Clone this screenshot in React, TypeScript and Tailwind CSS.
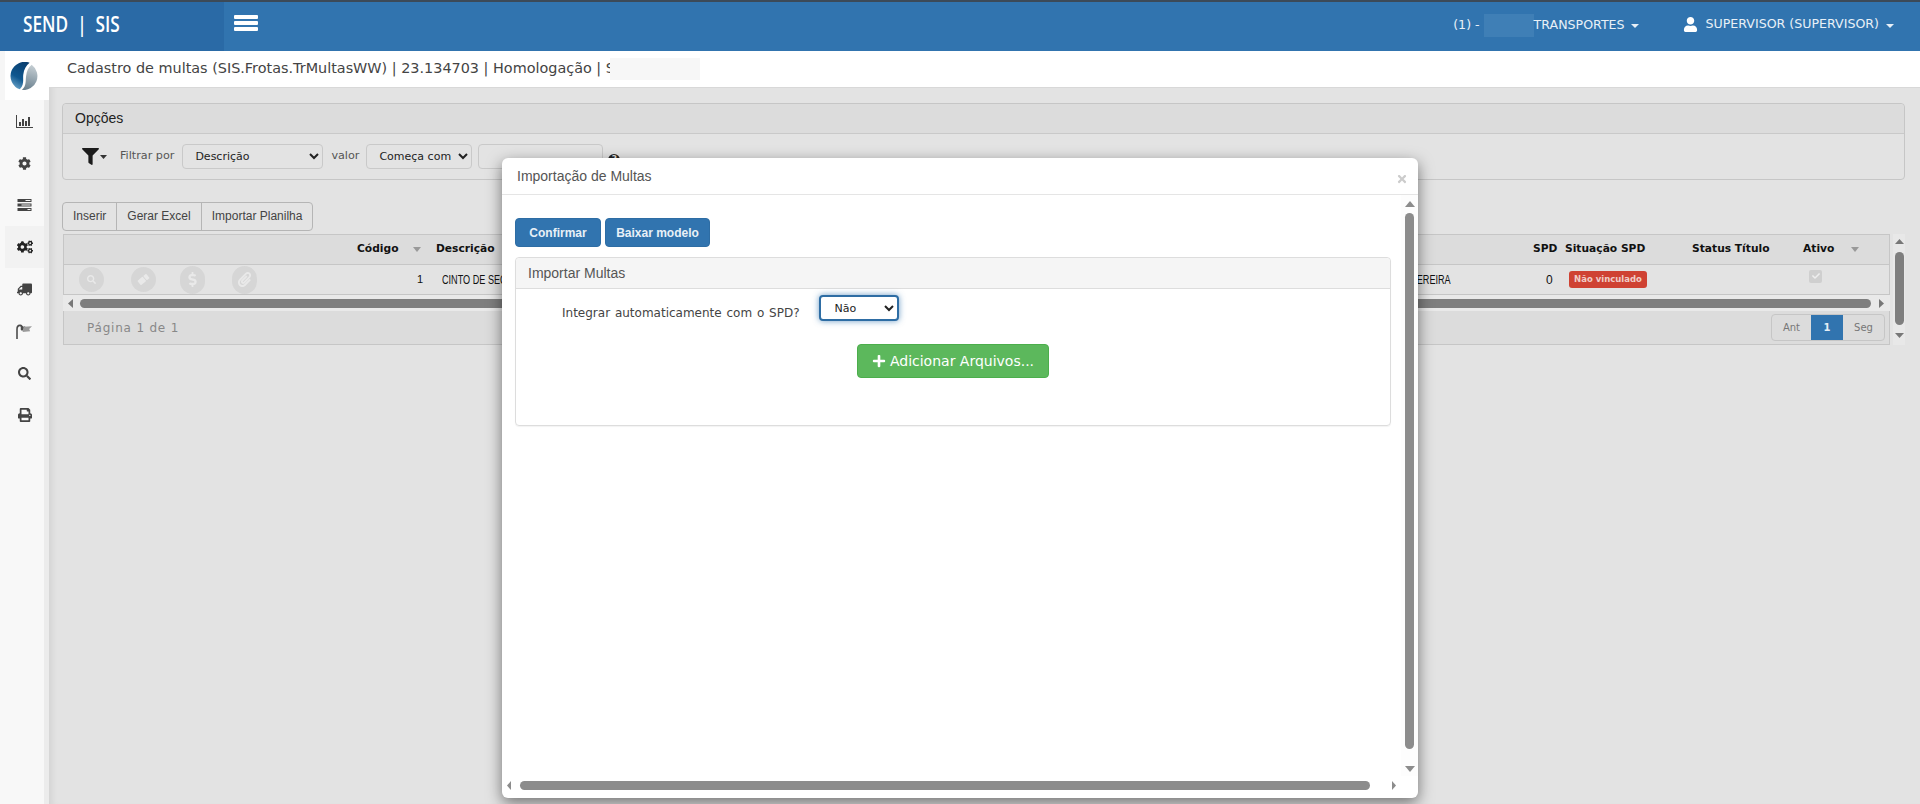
import { FaCheck, FaCog, FaCogs, FaDollarSign, FaFilter, FaPaperclip, FaPlus, FaPrint, FaSearch, FaTimes, FaTruck, FaUser } from 'react-icons/fa';

const Triangle = ({ dir, className }: { dir: 'up' | 'down' | 'left' | 'right'; className: string }) => {
  const points = { up: '0,8 5,0 10,8', down: '0,0 10,0 5,8', left: '8,0 8,10 0,5', right: '0,0 8,5 0,10' }[dir];
  const box = dir === 'up' || dir === 'down' ? '0 0 10 8' : '0 0 8 10';
  return (
    <svg viewBox={box} preserveAspectRatio="none" className={className} fill="currentColor">
      <polygon points={points} />
    </svg>
  );
};

const BarsIcon = () => (
  <svg viewBox="0 0 24 16" className="w-[24px] h-[16px]" fill="currentColor">
    <rect x="0" y="0" width="24" height="4" rx="1" />
    <rect x="0" y="6" width="24" height="4" rx="1" />
    <rect x="0" y="12" width="24" height="4" rx="1" />
  </svg>
);

const ChartIcon = () => (
  <svg viewBox="0 0 17 13" className="w-[17px] h-[13px]" fill="currentColor">
    <path d="M0 0h1v12h16v1H0z" />
    <rect x="3" y="7" width="2" height="4" />
    <rect x="6" y="4" width="2" height="7" />
    <rect x="9" y="6" width="2" height="5" />
    <rect x="12" y="2" width="2" height="9" />
  </svg>
);

const TasksIcon = () => (
  <svg viewBox="0 0 14 12" className="w-[15px] h-[12px]" fill="currentColor">
    <path d="M0 0h14v3H0z" />
    <path d="M0 4.5h14v3H0z" />
    <path d="M0 9h14v3H0z" />
    <path d="M8 1h5v1H8zM4 5.5h9v1H4zM10 10h3v1h-3z" fill="#f8f8f8" />
  </svg>
);

const FlagIcon = () => (
  <svg viewBox="0 0 18 16" className="w-[17px] h-[15px]">
    <path d="M1 16V5.5C1 3 2.2 1.5 4 1.5c1 0 1.6.4 2 1" fill="none" stroke="#4b4b4b" strokeWidth="1.7" />
    <path d="M5 .5l3 2.5 2-.5-3.5 5L5 6z" fill="#4b4b4b" />
    <path d="M8 3l9-.6-3 3 1 2.4-8 .6z" fill="#9a9a9a" />
  </svg>
);

const EraserIcon = () => (
  <svg viewBox="0 0 16 16" className="w-[13px] h-[13px]" fill="currentColor">
    <g transform="rotate(-40 8 8)">
      <rect x="1" y="4.5" width="8.5" height="7" rx="1" />
      <rect x="10.5" y="4.5" width="4.5" height="7" rx="1" />
    </g>
  </svg>
);

const Logo = () => (
  <svg viewBox="0 0 40 40" className="w-[28px] h-[28px]">
    <defs>
      <linearGradient id="logoBlue" x1="0.7" y1="0" x2="0.3" y2="1">
        <stop offset="0" stopColor="#0a3f70" />
        <stop offset="0.6" stopColor="#0f578f" />
        <stop offset="1" stopColor="#6aa3c8" />
      </linearGradient>
      <linearGradient id="logoGray" x1="0.6" y1="0" x2="0.4" y2="1">
        <stop offset="0" stopColor="#c5ced3" />
        <stop offset="1" stopColor="#6b818f" />
      </linearGradient>
    </defs>
    <path d="M28 1A20 20 0 0 0 14 39C21 32 18 24 19 18 20 10 23 5 28 1z" fill="url(#logoBlue)" />
    <path d="M31 4A20 20 0 0 1 17 40C24 34 22 26 23 20 24 13 26 8 31 4z" fill="url(#logoGray)" />
  </svg>
);

const sideItems = [
  { icon: <ChartIcon />, active: false },
  { icon: <FaCog size={13} />, active: false },
  { icon: <TasksIcon />, active: false },
  { icon: <FaCogs size={16} className="text-[#222]" />, active: true },
  { icon: <FaTruck size={15} className="-scale-x-100" />, active: false },
  { icon: <FlagIcon />, active: false },
  { icon: <FaSearch size={13} />, active: false },
  { icon: <FaPrint size={14} />, active: false },
];

const rowActions = [
  { icon: <FaSearch size={9} />, box: 'w-[25px] h-[25px] ml-[15px]' },
  { icon: <EraserIcon />, box: 'w-[25px] h-[25px] ml-[27px]' },
  { icon: <FaDollarSign size={15} />, box: 'w-[25px] h-[28px] ml-[24px]' },
  { icon: <FaPaperclip size={15} />, box: 'w-[25px] h-[28px] ml-[27px]' },
];

export default function App() {
  return (
    <div className="relative w-[1920px] h-[804px] overflow-hidden bg-[#e3e3e3] font-['Liberation_Sans',sans-serif]">
      {/* barra superior */}
      <header className="flex h-[51px] border-t-2 border-[#3c4a58] bg-[#3174af] text-white">
        <div className="flex items-center w-[224px] pl-[23px] pb-[3px] bg-[#2a6aa6]">
          <span className="inline-block origin-left scale-x-[0.82] font-['Open_Sans',sans-serif] text-[21px] font-semibold whitespace-pre">SEND  |  SIS</span>
        </div>
        <button className="flex items-start pt-[13px] pl-[10px] text-white">
          <BarsIcon />
        </button>
        <div className="flex-1" />
        <div className="flex items-center h-[47px] pr-[26px] font-['DejaVu_Sans',sans-serif] text-[12.6px] text-[#e8f0f7]">
          <span className="whitespace-pre">(1) - </span>
          <span className="w-[50px] h-[23px] bg-[#3f7fb6]" />
          <span>TRANSPORTES</span>
          <Triangle dir="down" className="w-[8px] h-[4px] ml-[6px]" />
          <FaUser size={15} className="ml-[44px] mb-[2px] text-white" />
          <span className="ml-[8px] mb-[2px]">SUPERVISOR (SUPERVISOR)</span>
          <Triangle dir="down" className="w-[8px] h-[4px] ml-[7px]" />
        </div>
      </header>

      <div className="flex h-[753px]">
        {/* menu lateral */}
        <aside className="flex flex-col w-[49px] shrink-0 bg-[#ececec]">
          <div className="h-[49px] pl-[5px] bg-[#f6f6f6]">
            <div className="flex items-center justify-center h-full pr-[6px] bg-white">
              <Logo />
            </div>
          </div>
          <div className="flex-1 w-[44px] pl-[5px] bg-[#f8f8f8]">
            {sideItems.map((item, i) => (
              <div key={i} className={`flex items-center justify-center h-[42px] text-[#444] ${item.active ? 'bg-[#f2f2f2]' : 'bg-[#f8f8f8]'}`}>
                {item.icon}
              </div>
            ))}
          </div>
        </aside>

        <main className="flex-1 min-w-0 shadow-[inset_7px_0_6px_-4px_rgba(0,0,0,0.07)]">
          {/* título */}
          <div className="flex items-center h-[37px] pl-[18px] bg-white border-b border-[#d8d8d8] font-['DejaVu_Sans',sans-serif] text-[14.4px] text-[#444]">
            <span className="whitespace-pre">Cadastro de multas (SIS.Frotas.TrMultasWW) | 23.134703 | Homologação | S</span>
            <span className="w-[90px] h-[22px] -ml-[5px] bg-[#f7f7f7]" />
          </div>

          <div className="pt-[15px] pl-[13px] pr-[15px]">
            {/* opções */}
            <section className="h-[77px] border border-[#c6c6c6] rounded-[4px]">
              <div className="flex items-center h-[30px] pl-[12px] bg-[#dcdcdc] border-b border-[#c9c9c9] rounded-t-[4px] text-[14px] text-[#222]">Opções</div>
              <div className="flex items-center h-[45px] pl-[19px] font-['DejaVu_Sans',sans-serif] text-[11.2px] text-[#555]">
                <FaFilter size={17} className="text-[#1c1c1c]" />
                <Triangle dir="down" className="w-[7px] h-[4px] ml-[1px] text-[#333]" />
                <span className="ml-[13px]">Filtrar por</span>
                <select defaultValue="Descrição" className="w-[141px] h-[25px] ml-[8px] pl-[8px] bg-[#e3e3e3] border border-[#c9c9c9] rounded-[4px] text-[11px] text-[#222]">
                  <option>Descrição</option>
                </select>
                <span className="ml-[8px]">valor</span>
                <select defaultValue="Começa com" className="w-[106px] h-[25px] ml-[7px] pl-[8px] bg-[#e3e3e3] border border-[#c9c9c9] rounded-[4px] text-[11px] text-[#222]">
                  <option>Começa com</option>
                </select>
                <span className="w-[125px] h-[25px] ml-[6px] border border-[#c9c9c9] rounded-[4px]" />
                <span className="flex items-center justify-center w-[12px] h-[12px] ml-[5px] mt-[6px] rounded-full bg-[#222] text-[9px] font-bold text-[#ddd]">?</span>
              </div>
            </section>

            {/* botões */}
            <div className="flex w-fit h-[29px] mt-[22px] border border-[#b5b5b5] rounded-[4px] text-[12px] text-[#444]">
              <div className="flex items-center px-[10px] pb-[2px] border-r border-[#b5b5b5]">Inserir</div>
              <div className="flex items-center px-[10px] pb-[2px] border-r border-[#b5b5b5]">Gerar Excel</div>
              <div className="flex items-center px-[10px] pb-[2px]">Importar Planilha</div>
            </div>

            {/* grade */}
            <div className="flex mt-[3px]">
              <div className="w-[1827px] ml-[1px]">
                <div className="flex items-center h-[31px] bg-[#dcdcdc] border border-[#c6c6c6] font-['DejaVu_Sans',sans-serif] text-[10.7px] font-bold text-[#111]">
                  <span className="ml-[293px] w-[56px]">Código</span>
                  <Triangle dir="down" className="w-[8px] h-[5px] text-[#999]" />
                  <span className="ml-[15px] w-[1097px]">Descrição</span>
                  <span className="w-[32px]">SPD</span>
                  <span className="w-[127px]">Situação SPD</span>
                  <span className="w-[111px]">Status Título</span>
                  <span className="w-[48px]">Ativo</span>
                  <Triangle dir="down" className="w-[8px] h-[5px] text-[#999]" />
                </div>
                <div className="flex items-center h-[30px] border border-t-0 border-[#c6c6c6] text-[11px] text-[#111]">
                  {rowActions.map((a, i) => (
                    <span key={i} className={`flex items-center justify-center shrink-0 rounded-full bg-[#d6d6d6] text-[#e9e9e9] ${a.box}`}>{a.icon}</span>
                  ))}
                  <span className="ml-[160px] w-[6px] text-[11px]">1</span>
                  <span className="flex justify-between ml-[19px] w-[1009px] whitespace-nowrap text-[12px]">
                    <span className="inline-block origin-left scale-x-[0.76]">CINTO DE SEGURANÇA</span>
                    <span className="inline-block origin-right scale-x-[0.76]">PEREIRA</span>
                  </span>
                  <span className="ml-[95px] w-[7px] text-[12px]">0</span>
                  <span className="flex items-center justify-center shrink-0 w-[78px] h-[17px] ml-[16px] rounded-[3px] bg-[#cf4233] whitespace-nowrap font-['DejaVu_Sans',sans-serif] text-[8.5px] font-bold text-[#f0cdc8]">Não vinculado</span>
                  <span className="flex items-center justify-center w-[13px] h-[13px] ml-[162px] mb-[7px] rounded-[2px] bg-[#cfcfcf] text-[#eee]"><FaCheck size={8} /></span>
                </div>
                <div className="flex items-center h-[16px] bg-[#e9e9e9]">
                  <Triangle dir="left" className="w-[5px] h-[9px] ml-[5px] text-[#777]" />
                  <div className="flex-1 h-[9px] ml-[7px] rounded-full bg-[#7e7e7e]" />
                  <Triangle dir="right" className="w-[5px] h-[9px] ml-[8px] mr-[6px] text-[#777]" />
                </div>
                <div className="flex items-center justify-between h-[34px] pl-[23px] pr-[4px] bg-[#dcdcdc] border border-t-0 border-[#c6c6c6]">
                  <span className="font-['DejaVu_Sans',sans-serif] text-[12px] tracking-[0.8px] text-[#888]">Página 1 de 1</span>
                  <div className="flex h-[27px] border border-[#c6c6c6] rounded-[4px] font-['DejaVu_Sans',sans-serif] text-[10px] text-[#777]">
                    <span className="flex items-center justify-center w-[39px]">Ant</span>
                    <span className="flex items-center justify-center w-[32px] bg-[#3174af] font-bold text-[#e3edf5]">1</span>
                    <span className="flex items-center justify-center w-[41px]">Seg</span>
                  </div>
                </div>
              </div>
              <div className="flex flex-col items-center w-[12px] ml-[3px] pt-[5px] h-[111px] bg-[#e8e8e8]">
                <Triangle dir="up" className="w-[9px] h-[5px] text-[#777]" />
                <div className="w-[9px] h-[73px] mt-[8px] rounded-full bg-[#7e7e7e]" />
                <Triangle dir="down" className="w-[9px] h-[5px] mt-[8px] text-[#777]" />
              </div>
            </div>
          </div>
        </main>
      </div>

      {/* modal de importação */}
      <div className="absolute left-[502px] top-[158px] flex flex-col w-[916px] h-[640px] bg-white rounded-[6px] shadow-[0_5px_15px_rgba(0,0,0,0.5)]">
        <div className="flex items-center justify-between h-[37px] pl-[15px] pr-[10px] pt-[1px] border-b border-[#e5e5e5]">
          <h4 className="text-[14px] text-[#555]">Importação de Multas</h4>
          <FaTimes size={12} className="mt-[4px] text-[#ccc]" />
        </div>
        <div className="flex flex-1 min-h-0">
          <div className="flex-1 pl-[13px] pr-[10px] pt-[23px]">
            <div className="flex gap-[4px]">
              <button className="w-[86px] h-[29px] bg-[#3174af] border border-[#2e6da4] rounded-[4px] text-[12px] font-bold text-[#e8f0f7]">Confirmar</button>
              <button className="w-[105px] h-[29px] bg-[#3174af] border border-[#2e6da4] rounded-[4px] text-[12px] font-bold text-[#e8f0f7]">Baixar modelo</button>
            </div>
            <div className="h-[169px] mt-[10px] border border-[#ddd] rounded-[4px] shadow-[0_1px_1px_rgba(0,0,0,0.05)]">
              <div className="flex items-center h-[31px] pl-[12px] bg-[#f5f5f5] border-b border-[#ddd] rounded-t-[4px] text-[14px] text-[#555]">Importar Multas</div>
              <div className="flex items-start pl-[46px] pt-[6px]">
                <label className="mt-[9px] font-['DejaVu_Sans',sans-serif] text-[12px] font-medium text-[#444] [word-spacing:1px]">Integrar automaticamente com o SPD?</label>
                <select defaultValue="Não" className="w-[80px] h-[26px] ml-[19px] pl-[10px] bg-white border-2 border-[#2e6da4] rounded-[4px] shadow-[0_0_6px_rgba(49,116,175,0.7)] font-['DejaVu_Sans',sans-serif] text-[11px] text-[#222] outline-none">
                  <option>Não</option>
                </select>
              </div>
              <div className="flex items-center justify-center w-[192px] h-[34px] ml-[341px] mt-[22px] gap-[4px] bg-[#5cb85c] border border-[#4cae4c] rounded-[4px] font-['DejaVu_Sans',sans-serif] text-[14px] text-white">
                <FaPlus size={14} />
                <span>Adicionar Arquivos...</span>
              </div>
            </div>
          </div>
          <div className="flex flex-col items-center w-[17px] shrink-0 pt-[6px] bg-[#fdfdfd]">
            <Triangle dir="up" className="w-[10px] h-[6px] text-[#8c8c8c]" />
            <div className="w-[9px] h-[536px] mt-[6px] rounded-full bg-[#8c8c8c]" />
            <Triangle dir="down" className="w-[10px] h-[6px] mt-[17px] text-[#8c8c8c]" />
          </div>
        </div>
        <div className="flex items-center h-[19px] pl-[5px] pr-[22px] mb-[3px]">
          <Triangle dir="left" className="w-[4px] h-[9px] text-[#8c8c8c]" />
          <div className="flex-1 h-[9px] ml-[9px] rounded-full bg-[#8c8c8c]" />
          <Triangle dir="right" className="w-[4px] h-[9px] ml-[22px] text-[#8c8c8c]" />
        </div>
      </div>
    </div>
  );
}
